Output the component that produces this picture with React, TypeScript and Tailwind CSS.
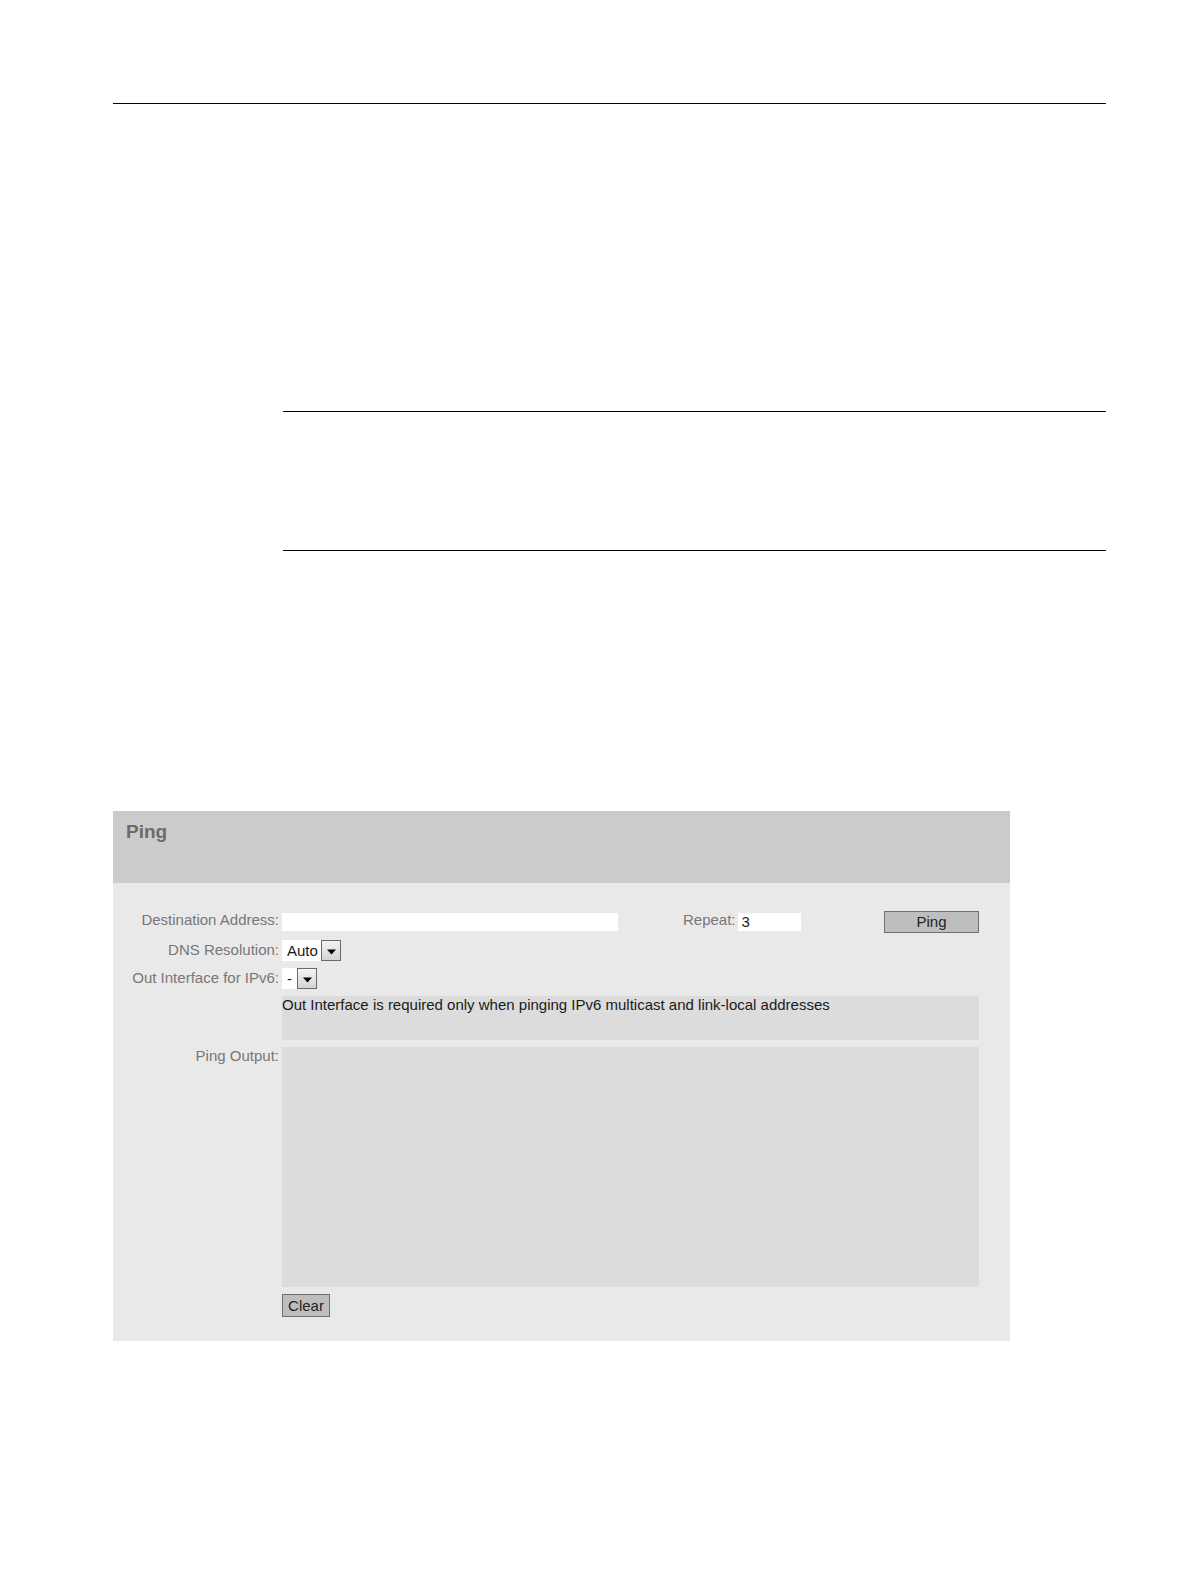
import { useState } from "react";
import type { ReactNode } from "react";

const buttonClass = "border border-[#6f6f6f] bg-[#bebebe] text-[#222222]";

type DropdownProps = {
  id: string;
  className: string;
  options: string[];
};

function Dropdown({ id, className, options }: DropdownProps) {
  return (
    <div className={`relative h-[21px] bg-white ${className}`}>
      <select id={id} className="block h-full w-full appearance-none bg-transparent pl-[5px] leading-5 text-[#1a1a1a]">
        {options.map((option) => (
          <option key={option}>{option}</option>
        ))}
      </select>
      <span className="pointer-events-none absolute inset-y-0 right-0 flex w-5 items-center justify-center border border-[#6a6a6a] bg-linear-to-b from-[#f4f4f4] to-[#d4d4d4]">
        <svg className="mt-0.5" width="9" height="6" viewBox="0 0 9 6" aria-hidden="true">
          <path d="M0 0.5h9L4.5 5.5z" fill="#000" />
        </svg>
      </span>
    </div>
  );
}

function Label({ htmlFor, className = "leading-[18px]", children }: { htmlFor: string; className?: string; children: ReactNode }) {
  return (
    <label htmlFor={htmlFor} className={`text-right text-[#777777] ${className}`}>
      {children}
    </label>
  );
}

export default function App() {
  const [address, setAddress] = useState("");
  const [repeat, setRepeat] = useState("3");
  const [output, setOutput] = useState("");

  return (
    <main className="min-h-screen bg-white pt-[103px] pr-[85px] pl-[113px] font-['Liberation_Sans',Arial,sans-serif] text-[15px]">
      <hr className="border-black" />
      <hr className="mt-[307px] ml-[170px] border-black" />
      <hr className="mt-[138px] ml-[170px] border-black" />

      <section className="mt-[260px] mr-24 bg-[#e9e9e9]">
        <header className="h-[72px] bg-[#cbcbcb] px-[13px] pt-[11px]">
          <h1 className="text-[19px] leading-5 font-bold text-[#6b6b6b]">Ping</h1>
        </header>

        <form
          className="grid grid-cols-[166px_1fr] gap-x-[3px] gap-y-[7px] pt-7 pr-[31px] pb-6"
          onSubmit={(e) => e.preventDefault()}
        >
          <Label htmlFor="destination">Destination Address:</Label>
          <div className="flex items-center">
            <input
              id="destination"
              type="text"
              value={address}
              onChange={(e) => setAddress(e.target.value)}
              className="h-[18px] w-0 max-w-[336px] flex-1 bg-white px-1 text-[#1a1a1a]"
            />
            <Label htmlFor="repeat" className="ml-[65px] self-start leading-[18px]">
              Repeat:
            </Label>
            <input
              id="repeat"
              type="text"
              value={repeat}
              onChange={(e) => setRepeat(e.target.value)}
              className="ml-0.5 h-[18px] w-[63px] bg-white px-1 text-[#1a1a1a]"
            />
            <button type="submit" className={`ml-auto h-[22px] w-[95px] leading-5 ${buttonClass}`}>
              Ping
            </button>
          </div>

          <Label htmlFor="dns" className="leading-5">
            DNS Resolution:
          </Label>
          <Dropdown id="dns" className="w-[59px]" options={["Auto", "IPv4", "IPv6"]} />

          <Label htmlFor="interface" className="leading-5">
            Out Interface for IPv6:
          </Label>
          <Dropdown id="interface" className="w-[35px]" options={["-"]} />

          <p className="col-start-2 min-h-11 bg-[#dcdcdc] leading-[18px] text-[#1a1a1a]">
            Out Interface is required only when pinging IPv6 multicast and link-local addresses
          </p>

          <Label htmlFor="output">Ping Output:</Label>
          <textarea
            id="output"
            readOnly
            value={output}
            className="block h-60 w-full resize-none bg-[#dcdcdc] text-[#1a1a1a]"
          />

          <button
            type="button"
            onClick={() => setOutput("")}
            className={`col-start-2 h-[23px] w-12 leading-5 ${buttonClass}`}
          >
            Clear
          </button>
        </form>
      </section>
    </main>
  );
}
